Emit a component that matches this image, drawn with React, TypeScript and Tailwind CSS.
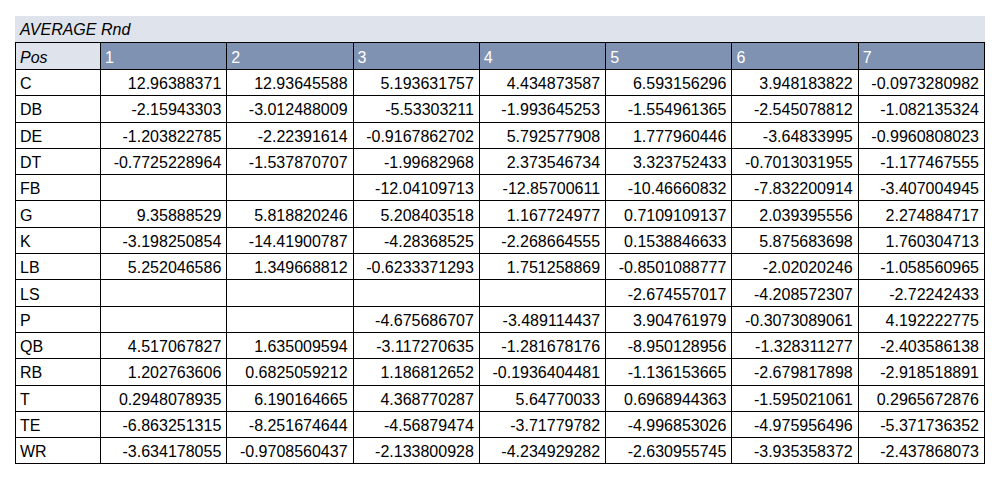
const columns = ['1', '2', '3', '4', '5', '6', '7']

const rows: [string, string[]][] = [
  ['C', ['12.96388371', '12.93645588', '5.193631757', '4.434873587', '6.593156296', '3.948183822', '-0.0973280982']],
  ['DB', ['-2.15943303', '-3.012488009', '-5.53303211', '-1.993645253', '-1.554961365', '-2.545078812', '-1.082135324']],
  ['DE', ['-1.203822785', '-2.22391614', '-0.9167862702', '5.792577908', '1.777960446', '-3.64833995', '-0.9960808023']],
  ['DT', ['-0.7725228964', '-1.537870707', '-1.99682968', '2.373546734', '3.323752433', '-0.7013031955', '-1.177467555']],
  ['FB', ['', '', '-12.04109713', '-12.85700611', '-10.46660832', '-7.832200914', '-3.407004945']],
  ['G', ['9.35888529', '5.818820246', '5.208403518', '1.167724977', '0.7109109137', '2.039395556', '2.274884717']],
  ['K', ['-3.198250854', '-14.41900787', '-4.28368525', '-2.268664555', '0.1538846633', '5.875683698', '1.760304713']],
  ['LB', ['5.252046586', '1.349668812', '-0.6233371293', '1.751258869', '-0.8501088777', '-2.02020246', '-1.058560965']],
  ['LS', ['', '', '', '', '-2.674557017', '-4.208572307', '-2.72242433']],
  ['P', ['', '', '-4.675686707', '-3.489114437', '3.904761979', '-0.3073089061', '4.192222775']],
  ['QB', ['4.517067827', '1.635009594', '-3.117270635', '-1.281678176', '-8.950128956', '-1.328311277', '-2.403586138']],
  ['RB', ['1.202763606', '0.6825059212', '1.186812652', '-0.1936404481', '-1.136153665', '-2.679817898', '-2.918518891']],
  ['T', ['0.2948078935', '6.190164665', '4.368770287', '5.64770033', '0.6968944363', '-1.595021061', '0.2965672876']],
  ['TE', ['-6.863251315', '-8.251674644', '-4.56879474', '-3.71779782', '-4.996853026', '-4.975956496', '-5.371736352']],
  ['WR', ['-3.634178055', '-0.9708560437', '-2.133800928', '-4.234929282', '-2.630955745', '-3.935358372', '-2.437868073']],
]

export default function App() {
  return (
    <div className="w-[1007px] h-[487px] bg-white pt-[16px] pl-[15px] font-['Liberation_Sans',Arial,sans-serif] text-[16px] text-black">
      <div className="w-[970px]">
        {/* Title bar */}
        <div className="h-[26px] bg-[#dfe3eb] flex items-center pl-[5px] pt-[2px] italic leading-none">
          AVERAGE Rnd
        </div>

        <table className="w-[970px] table-fixed border-collapse">
          <colgroup>
            <col className="w-[85px]" />
            {columns.map((c) => (
              <col key={c} />
            ))}
          </colgroup>
          <thead>
            <tr className="h-[27px]">
              <th className="border border-black bg-[#dfe3eb] text-left font-normal italic pl-[4px] pt-[3px] leading-none">Pos</th>
              {columns.map((c) => (
                <th key={c} className="border border-black bg-[#7f92b1] text-left font-normal text-white pl-[4px] pt-[3px] leading-none">
                  {c}
                </th>
              ))}
            </tr>
          </thead>
          <tbody>
            {rows.map(([pos, vals]) => (
              <tr key={pos} className="h-[26.3px]">
                <td className="border border-black pl-[4px] pt-[3px] leading-none">{pos}</td>
                {vals.map((v, i) => (
                  <td key={i} className="border border-black text-right pr-[5px] pt-[3px] leading-none">
                    {v}
                  </td>
                ))}
              </tr>
            ))}
          </tbody>
        </table>
      </div>
    </div>
  )
}
